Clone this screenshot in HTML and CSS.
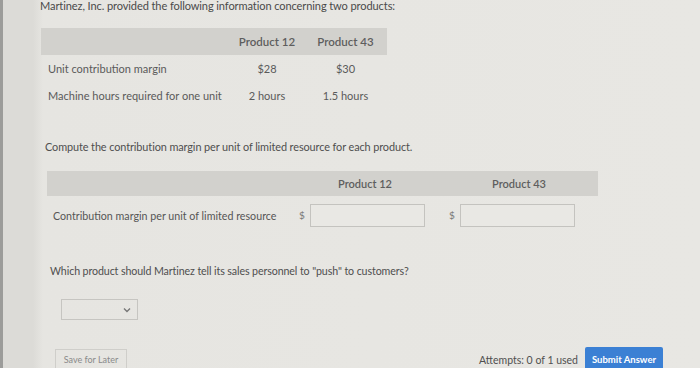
FILE: index.html
```html
<!DOCTYPE html>
<html>
<head>
<meta charset="utf-8">
<link rel="stylesheet" href="styles.css">
</head>
<body>
<div class="page">
  <p class="title">Martinez, Inc. provided the following information concerning two products:</p>

  <div class="t1">
    <div class="t1-head">
      <span></span><span>Product 12</span><span>Product 43</span>
    </div>
    <div class="t1-row">
      <span class="lbl">Unit contribution margin</span><span>$28</span><span>$30</span>
    </div>
    <div class="t1-row">
      <span class="lbl">Machine hours required for one unit</span><span>2 hours</span><span>1.5 hours</span>
    </div>
  </div>

  <p class="q1">Compute the contribution margin per unit of limited resource for each product.</p>

  <div class="t2">
    <div class="t2-head">
      <span></span><span>Product 12</span><span>Product 43</span>
    </div>
    <div class="t2-row">
      <span class="lbl">Contribution margin per unit of limited resource</span>
      <span class="cell"><span class="dollar">$</span><span class="input"></span></span>
      <span class="cell"><span class="dollar">$</span><span class="input"></span></span>
    </div>
  </div>

  <p class="q2">Which product should Martinez tell its sales personnel to "push" to customers?</p>

  <div class="select">
    <svg width="8" height="6" viewBox="0 0 8 6"><path d="M1 1.5 L4 4.5 L7 1.5" fill="none" stroke="#777" stroke-width="1.4"/></svg>
  </div>

  <div class="footer">
    <span class="save">Save for Later</span>
    <span class="attempts">Attempts: 0 of 1 used</span>
    <span class="submit">Submit Answer</span>
  </div>
</div>
</body>
</html>
```

FILE: styles.css
```css
html, body {
  margin: 0;
  padding: 0;
  height: 100%;
  overflow: hidden;
}
body {
  background: #e5e4e0;
  font-family: Lato, "Open Sans", sans-serif;
  color: #555;
}
.page {
  height: 368px;
  box-sizing: border-box;
  border-left: 3px solid #9c9c9a;
  background: linear-gradient(to right, #dcdbd7 0, #dcdbd7 30px, #e6e5e1 40px, #e8e7e3 100%);
  padding-left: 37px;
  display: flex;
  flex-direction: column;
  position: relative;
}
.title {
  margin: 0;
  font-size: 11.05px;
  line-height: 12px;
  color: #4a4a4a;
  letter-spacing: -0.1px;
}
.t1 {
  margin-top: 16px;
  width: 346px;
  margin-left: 1px;
}
.t1-head, .t1-row {
  display: grid;
  grid-template-columns: 189px 74px 83px;
  align-items: center;
}
.t1-head {
  background: #d2d1cd;
  height: 27px;
  font-size: 11.5px;
  color: #5e5e5e;
  font-weight: 600;
}
.t1-head span, .t1-row span { text-align: center; }
.t1-row {
  height: 27px;
  font-size: 11px;
  color: #5a5a5a;
}
.t1-row .lbl { text-align: left; padding-left: 7px; }
.q1 {
  margin: 31px 0 0 5px;
  font-size: 10.9px;
  line-height: 14px;
  color: #4f4f4f;
  letter-spacing: -0.1px;
}
.t2 {
  margin: 17px 0 0 7px;
  width: 551px;
}
.t2-head, .t2-row {
  display: grid;
  grid-template-columns: 243px 150px 158px;
  align-items: center;
}
.t2-head {
  background: #d2d1cd;
  height: 25px;
  font-size: 11px;
  color: #5e5e5e;
  font-weight: 600;
}
.t2-head span { text-align: center; }
.t2-row {
  height: 34px;
  margin-top: 2px;
  font-size: 10.7px;
  color: #555;
}
.t2-row .lbl { padding-left: 6px; }
.cell {
  display: flex;
  align-items: center;
  padding-left: 9px;
  gap: 5px;
}
.dollar { font-size: 10px; color: #777; }
.input {
  width: 113px;
  height: 21px;
  border: 1px solid #c4c3bf;
  background: #e9e8e4;
}
.q2 {
  margin: 32px 0 0 10px;
  font-size: 10.65px;
  line-height: 14px;
  color: #4f4f4f;
  letter-spacing: -0.1px;
}
.select {
  margin: 21px 0 0 21px;
  height: 19px;
  border: 1px solid #c6c5c1;
  display: flex;
  align-items: center;
  justify-content: flex-end;
  padding-right: 6px;
  box-sizing: content-box;
  width: 69px;
}
.footer {
  margin-top: auto;
  display: flex;
  align-items: flex-end;
  height: 21px;
}
.save {
  margin-left: 15px;
  width: 70px;
  height: 18px;
  border: 1px solid #cfceca;
  border-bottom: none;
  font-size: 9px;
  color: #8a8a8a;
  text-align: center;
  line-height: 20px;
}
.attempts {
  margin-left: auto;
  font-size: 10.5px;
  color: #4f4f4f;
  margin-bottom: 2px;
}
.submit {
  margin: 0 37px 0 7px;
  width: 78px;
  height: 21px;
  background: #3b80d4;
  border-radius: 2px 2px 0 0;
  color: #fff;
  font-size: 9.5px;
  font-weight: 700;
  text-align: center;
  line-height: 25px;
}
```
